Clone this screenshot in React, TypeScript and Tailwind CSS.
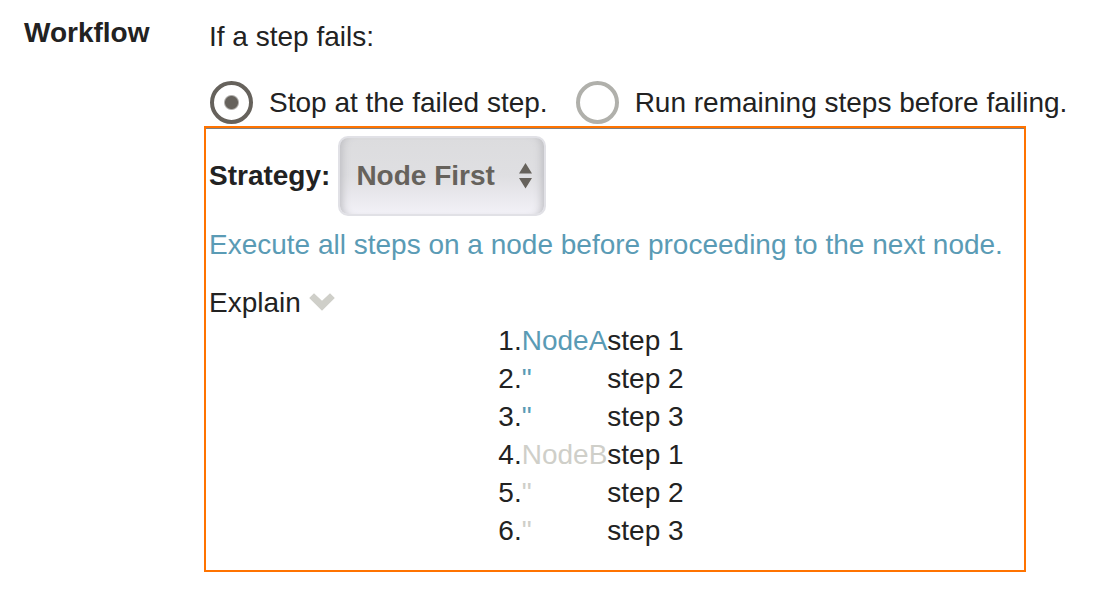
import { useState } from "react";

const rows = [
  { node: "NodeA", label: "NodeA", step: "step 1" },
  { node: "NodeA", label: '"', step: "step 2" },
  { node: "NodeA", label: '"', step: "step 3" },
  { node: "NodeB", label: "NodeB", step: "step 1" },
  { node: "NodeB", label: '"', step: "step 2" },
  { node: "NodeB", label: '"', step: "step 3" },
];

type RadioProps = {
  value: string;
  label: string;
  selected: string;
  onSelect: (value: string) => void;
};

function RadioOption({ value, label, selected, onSelect }: RadioProps) {
  return (
    <label className="flex shrink-0 items-center gap-4 whitespace-nowrap">
      <input
        type="radio"
        name="on-failure"
        value={value}
        checked={selected === value}
        onChange={() => onSelect(value)}
        className="size-[43px] shrink-0 appearance-none rounded-full border-4 border-[#b0b0ab] bg-white checked:border-[#66625c] checked:bg-[radial-gradient(circle,#66625c_6px,#ffffff_8px)]"
      />
      {label}
    </label>
  );
}

export default function App() {
  const [onFailure, setOnFailure] = useState("stop");
  const [open, setOpen] = useState(true);

  return (
    <main className="flex min-h-screen bg-white font-['Liberation_Sans',Arial,sans-serif] text-[28px] leading-[38px] text-[#222222]">
      <h2 className="w-[204px] shrink-0 pt-[14px] pl-6 font-bold">Workflow</h2>
      <section className="min-w-0 flex-1 pt-[18px] pr-[76px]">
        <fieldset className="min-w-0 pl-[5px]">
          <legend>If a step fails:</legend>
          <div className="flex gap-7 pt-[25px] pb-[2px] pl-px">
            <RadioOption value="stop" label="Stop at the failed step." selected={onFailure} onSelect={setOnFailure} />
            <RadioOption value="continue" label="Run remaining steps before failing." selected={onFailure} onSelect={setOnFailure} />
          </div>
        </fieldset>

        <div className="border-2 border-[#ff7300] pb-[20px] shadow-[inset_0_1px_0_#808080]">
          <div className="px-[3px] pt-2">
            <div className="flex items-center gap-2">
              <label htmlFor="strategy" className="font-bold">
                Strategy:
              </label>
              <div className="relative">
                <select
                  id="strategy"
                  defaultValue="node"
                  className="block h-20 w-[208px] appearance-none rounded-[10px] border-2 border-[#e1e1e6] bg-linear-to-b from-[#dcdcde] via-[#dfdfe2] to-[#f2f1f7] pl-4 font-bold text-[#66625c] shadow-[inset_9px_0_8px_-7px_#bcbcc0,inset_-9px_0_8px_-7px_#bcbcc0]"
                >
                  <option value="node">Node First</option>
                  <option value="step">Step First</option>
                </select>
                <svg
                  className="pointer-events-none absolute top-[27px] right-[14px] h-[26px] w-[13px]"
                  viewBox="0 0 13 26"
                  fill="#66625c"
                  aria-hidden="true"
                >
                  <path d="M6.5 0 13 10.5H0zM6.5 25.5 0 15h13z" />
                </svg>
              </div>
            </div>
            <p className="pt-[10px] text-[#5a9bb5]">Execute all steps on a node before proceeding to the next node.</p>
            <button
              type="button"
              aria-expanded={open}
              onClick={() => setOpen(!open)}
              className="mt-[20px] flex items-center gap-2"
            >
              Explain
              <svg className="h-5 w-[26px]" viewBox="0 0 26 20" fill="#cfcfc9" aria-hidden="true">
                <path d="M5 0.3 13 7.8 21 0.3 25.8 5 13 17.8 0.2 5z" />
              </svg>
            </button>
          </div>
          {open && (
            <div className="flex justify-center pr-12">
              <table className="border-collapse">
                <tbody>
                  {rows.map((row, index) => (
                    <tr key={index}>
                      <td className="p-0 text-right">{index + 1}.</td>
                      <td className={row.node === "NodeA" ? "p-0 text-[#5a9bb5]" : "p-0 text-[#cfcfc9]"}>
                        {row.label}
                      </td>
                      <td className="p-0">{row.step}</td>
                    </tr>
                  ))}
                </tbody>
              </table>
            </div>
          )}
        </div>
      </section>
    </main>
  );
}
